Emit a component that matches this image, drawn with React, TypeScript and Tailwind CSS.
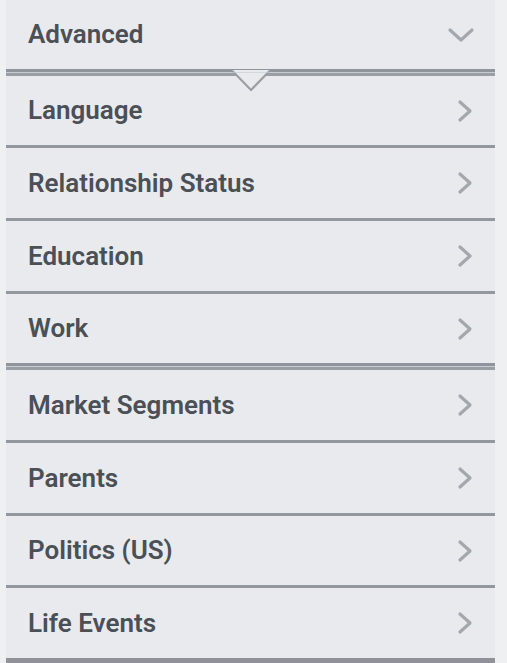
const rows = [
  { label: "Language", h: "h-[69px]", sep: "single" },
  { label: "Relationship Status", h: "h-[70px]", sep: "single" },
  { label: "Education", h: "h-[70px]", sep: "single" },
  { label: "Work", h: "h-[69px]", sep: "double" },
  { label: "Market Segments", h: "h-[70px]", sep: "single" },
  { label: "Parents", h: "h-[70px]", sep: "single" },
  { label: "Politics (US)", h: "h-[69px]", sep: "single" },
  { label: "Life Events", h: "h-[70px]", sep: "bottom" },
];

function ChevronRight() {
  return (
    <svg width="16" height="24" viewBox="0 0 16 24" fill="none">
      <polyline points="3,3 13,12 3,21" stroke="#a3a7ae" strokeWidth="3.2" strokeLinecap="round" strokeLinejoin="round" />
    </svg>
  );
}

function ChevronDown() {
  return (
    <svg width="28" height="16" viewBox="0 0 28 16" fill="none">
      <polyline points="3,3 14,13 25,3" stroke="#a3a7ae" strokeWidth="3.2" strokeLinecap="round" strokeLinejoin="round" />
    </svg>
  );
}

function DoubleRule() {
  return (
    <div className="flex flex-col">
      <div className="h-[3px] bg-[#90949c]" />
      <div className="h-[1px] bg-[#c9cbd0]" />
      <div className="h-[3px] bg-[#9a9ea5]" />
    </div>
  );
}

export default function App() {
  return (
    <div className="min-h-screen bg-[#eff0f2]" style={{ fontFamily: "Roboto, 'Liberation Sans', sans-serif" }}>
      <div className="ml-[6px] w-[489px] bg-[#e9eaed]">
        {/* header row */}
        <div className="flex h-[69px] items-center justify-between pl-[22px] pr-[20px]">
          <span className="text-[26px] font-semibold text-[#4b4f56]">Advanced</span>
          <ChevronDown />
        </div>

        <div className="relative">
          <DoubleRule />
          <svg
            className="absolute left-1/2 top-0 -ml-[19px]"
            width="38"
            height="23"
            viewBox="0 0 38 23"
          >
            <polygon points="0,1 19,21 38,1" fill="#e9eaed" />
            <polyline points="0,1.5 19,21 38,1.5" fill="none" stroke="#9a9ea5" strokeWidth="2.2" />
            <line x1="0" y1="3.5" x2="38" y2="3.5" stroke="#c9cbd0" strokeWidth="1" opacity="0.6" />
          </svg>
        </div>

        {rows.map((r) => (
          <div key={r.label}>
            <div className={`flex ${r.h} items-center justify-between pl-[22px] pr-[22px]`}>
              <span className="text-[26px] font-semibold text-[#4b4f56]">{r.label}</span>
              <ChevronRight />
            </div>
            {r.sep === "single" && <div className="h-[3px] bg-[#93979e]" />}
            {r.sep === "double" && <DoubleRule />}
            {r.sep === "bottom" && <div className="h-[8px] bg-[#8f9399]" />}
          </div>
        ))}
      </div>
    </div>
  );
}
